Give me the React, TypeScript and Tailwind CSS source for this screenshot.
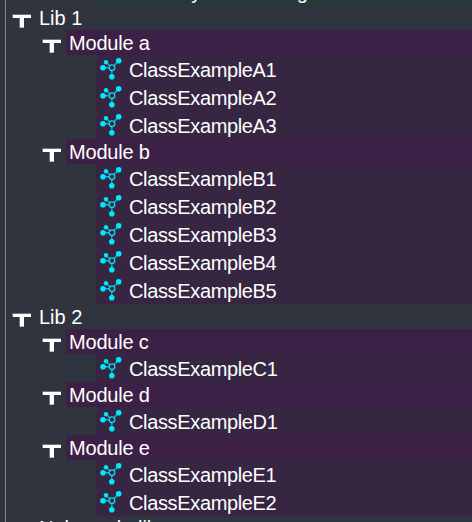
import React from "react";

type Module = { name: string; classes: string[] };
type Library = { name: string; modules: Module[] };

const libraries: Library[] = [
  {
    name: "Lib 1",
    modules: [
      { name: "Module a", classes: ["ClassExampleA1", "ClassExampleA2", "ClassExampleA3"] },
      {
        name: "Module b",
        classes: ["ClassExampleB1", "ClassExampleB2", "ClassExampleB3", "ClassExampleB4", "ClassExampleB5"],
      },
    ],
  },
  {
    name: "Lib 2",
    modules: [
      { name: "Module c", classes: ["ClassExampleC1"] },
      { name: "Module d", classes: ["ClassExampleD1"] },
      { name: "Module e", classes: ["ClassExampleE1", "ClassExampleE2"] },
    ],
  },
];

function Toggle() {
  return (
    <svg className="mt-[9px] h-[14px] w-[19px] shrink-0" viewBox="0 0 19 14">
      <path d="M0 0h19v4h-7v10h-5v-10h-7z" fill="#6f7379" />
      <path d="M1 1h18v3h-7v9.5h-4v-9.5h-7z" fill="#fff" />
    </svg>
  );
}

function ClassIcon() {
  return (
    <svg className="mt-[3px] h-[22px] w-[22px] shrink-0" viewBox="0 0 22 22" fill="#00e8ff">
      <path d="M12 9.7 18.7 2.7M12 9.7 6 4.3M12 9.7H3M11.8 10v8.7" stroke="#12b5c9" strokeWidth="1.4" />
      <circle cx="12" cy="9.7" r="2.8" fill="#36263f" stroke="#00dcf0" strokeWidth="1.3" />
      <circle cx="18.7" cy="2.8" r="2.8" />
      <circle cx="6" cy="4.3" r="2.2" />
      <circle cx="3" cy="9.7" r="2.8" />
      <circle cx="11.8" cy="18.7" r="2.8" />
    </svg>
  );
}

export default function App() {
  return (
    <div className="h-[522px] w-[472px] overflow-hidden bg-[#30343f] font-['Liberation_Sans',Arial,sans-serif] text-[20px] leading-[25px] text-white">
      <div className="ml-[5px] h-full border-l border-[#858890]">
        <div className="ml-[90px] flex h-[5px] items-end overflow-hidden bg-[#27383b] pl-[44px]">
          <span className="whitespace-pre">Library not existing</span>
        </div>
        {libraries.map((library) => (
          <section key={library.name}>
            <div className="flex h-[25px] pl-[6px]">
              <Toggle />
              <span className="ml-[8px] pt-px">{library.name}</span>
            </div>
            {library.modules.map((module) => (
              <div key={module.name}>
                <div className="flex h-[25px] pl-[36px]">
                  <Toggle />
                  <span className="ml-[5px] h-[25px] grow bg-[#3d2045] pl-[3px] pt-px tracking-[-0.2px]">{module.name}</span>
                </div>
                {module.classes.map((name) => (
                  <div key={name} className="ml-[90px] flex h-7 bg-[#372642] pl-[4px]">
                    <ClassIcon />
                    <span className="ml-[7px] mt-[3px] tracking-[-0.35px]">{name}</span>
                  </div>
                ))}
              </div>
            ))}
          </section>
        ))}
        <div className="pl-[33px]">Nol casele lib</div>
      </div>
    </div>
  );
}
